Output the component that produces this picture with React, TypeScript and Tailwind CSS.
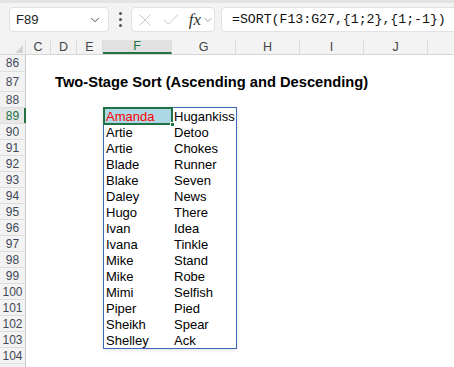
import { Check, ChevronDown, X } from 'lucide-react';

const rows: [string, string][] = [
  ['Amanda', 'Hugankiss'],
  ['Artie', 'Detoo'],
  ['Artie', 'Chokes'],
  ['Blade', 'Runner'],
  ['Blake', 'Seven'],
  ['Daley', 'News'],
  ['Hugo', 'There'],
  ['Ivan', 'Idea'],
  ['Ivana', 'Tinkle'],
  ['Mike', 'Stand'],
  ['Mike', 'Robe'],
  ['Mimi', 'Selfish'],
  ['Piper', 'Pied'],
  ['Sheikh', 'Spear'],
  ['Shelley', 'Ack'],
];

const columns = [
  { name: 'C', w: 'w-[25px]' },
  { name: 'D', w: 'w-[26px]' },
  { name: 'E', w: 'w-[26px]' },
  { name: 'F', w: 'w-[69px]' },
  { name: 'G', w: 'w-[64px]' },
  { name: 'H', w: 'w-[64px]' },
  { name: 'I', w: 'w-[64px]' },
  { name: 'J', w: 'w-[64px]' },
  { name: '', w: 'w-[40px]' },
];

// row number + height
const rowHeads: [number, string][] = [
  [86, 'h-[17px]'],
  [87, 'h-[20px]'],
  [88, 'h-[16px]'],
  ...Array.from({ length: 16 }, (_, i) => [89 + i, 'h-[16px]'] as [number, string]),
];

function Toolbar() {
  return (
    <div className="h-[40px] bg-[#f3f3f3] relative flex items-start pt-[7px] overflow-hidden">
      <div className="absolute top-0 left-0 right-0 h-[3px] bg-[#e4e4e4]" />
      {/* name box */}
      <div className="ml-[9px] shrink-0 w-[100px] h-[25px] bg-white border border-[#e1e1e1] rounded-[4px] flex items-center pl-[6px] pr-[6px]">
        <span className="text-[13px] text-[#222] flex-1">F89</span>
        <ChevronDown size={14} strokeWidth={1.6} className="text-[#444]" />
      </div>
      {/* kebab */}
      <div className="shrink-0 w-[22px] h-[25px] flex flex-col items-center justify-center gap-[3px]">
        <div className="w-[3px] h-[3px] rounded-full bg-[#555]" />
        <div className="w-[3px] h-[3px] rounded-full bg-[#555]" />
        <div className="w-[3px] h-[3px] rounded-full bg-[#555]" />
      </div>
      {/* fx box */}
      <div className="shrink-0 w-[84px] h-[25px] bg-white border border-[#e1e1e1] rounded-[4px] flex items-center pl-[3px] gap-[6px]">
        <X size={20} strokeWidth={1} className="text-[#b8b8b8]" />
        <Check size={20} strokeWidth={1} className="text-[#b8b8b8]" />
        <span className="ml-[2px] text-[17px] italic text-[#333] font-['Liberation_Serif',serif] leading-none">fx</span>
        <ChevronDown size={12} strokeWidth={1.4} className="text-[#777] -ml-[5px]" />
      </div>
      {/* formula */}
      <div className="ml-[6px] shrink-0 w-[300px] h-[25px] bg-white border border-[#e1e1e1] rounded-[4px] flex items-center pl-[10px]">
        <span className="text-[13.2px] text-[#111] font-['Liberation_Mono',monospace] whitespace-nowrap">
          =SORT(F13:G27,{'{'}1;2{'}'},{'{'}1;-1{'}'})
        </span>
      </div>
    </div>
  );
}

function ColumnHeader() {
  return (
    <div className="flex h-[15px] bg-[#f3f3f3] border-b border-[#d6d6d6]">
      <div className="w-[26px] shrink-0 relative border-r border-[#dcdcdc]">
        <div className="absolute right-[2px] bottom-[1px] w-0 h-0 border-l-[8px] border-l-transparent border-b-[8px] border-b-[#d3d3d3]" />
      </div>
      {columns.map((c) => (
        <div
          key={c.name + c.w}
          className={`${c.w} shrink-0 flex items-center justify-center text-[12.5px] leading-none border-r border-[#dcdcdc] ${
            c.name === 'F' ? 'bg-[#e1e1e1] text-[#217346] border-b-2 border-b-[#217346]' : 'text-[#444]'
          }`}
        >
          {c.name}
        </div>
      ))}
    </div>
  );
}

export default function App() {
  return (
    <div className="w-[454px] h-[367px] overflow-hidden bg-white font-['Liberation_Sans',Arial,sans-serif]">
      <Toolbar />
      <ColumnHeader />
      <div className="flex">
        {/* row headers */}
        <div className="w-[26px] shrink-0 flex flex-col bg-[#f3f3f3] border-r border-[#c9c9c9]">
          {rowHeads.map(([n, h]) => (
            <div
              key={n}
              className={`${h} relative flex items-center justify-center text-[12px] leading-none border-b border-[#dedede] ${
                n === 89 ? 'text-[#217346] bg-[#e8e8e8]' : 'text-[#3f4a58]'
              }`}
            >
              {n}
              {n === 89 && <div className="absolute right-[-1px] top-0 bottom-0 w-[2px] bg-[#217346]" />}
            </div>
          ))}
          <div className="h-[16px]" />
        </div>

        {/* sheet */}
        <div className="flex-1 flex flex-col">
          <div className="h-[17px]" />
          <div className="h-[20px] flex items-center pl-[29px]">
            <span className="text-[14.7px] font-bold text-black whitespace-nowrap">
              Two-Stage Sort (Ascending and Descending)
            </span>
          </div>
          <div className="h-[15px]" />
          <div className="pl-[77px]">
            <div className="w-[134px] border border-[#3f68b8] shadow-[0_1px_4px_rgba(0,0,0,0.12)] flex flex-col">
              {rows.map(([a, b], i) => (
                <div key={i} className="h-[16px] flex text-[13px] leading-none text-black">
                  <div className={`w-[68px] relative flex items-center pl-[2px] ${i === 0 ? 'bg-[#add8e6] text-[#ff0000]' : ''}`}>
                    {a}
                    {i === 0 && (
                      <>
                        <div className="absolute -left-[1px] -top-[1px] -right-[1px] -bottom-[1px] border-2 border-[#217346]" />
                        <div className="absolute -right-[3px] -bottom-[3px] w-[5px] h-[5px] bg-[#217346] border border-white" />
                      </>
                    )}
                  </div>
                  <div className="flex-1 flex items-center pl-[2px]">{b}</div>
                </div>
              ))}
            </div>
          </div>
        </div>
      </div>
    </div>
  );
}
